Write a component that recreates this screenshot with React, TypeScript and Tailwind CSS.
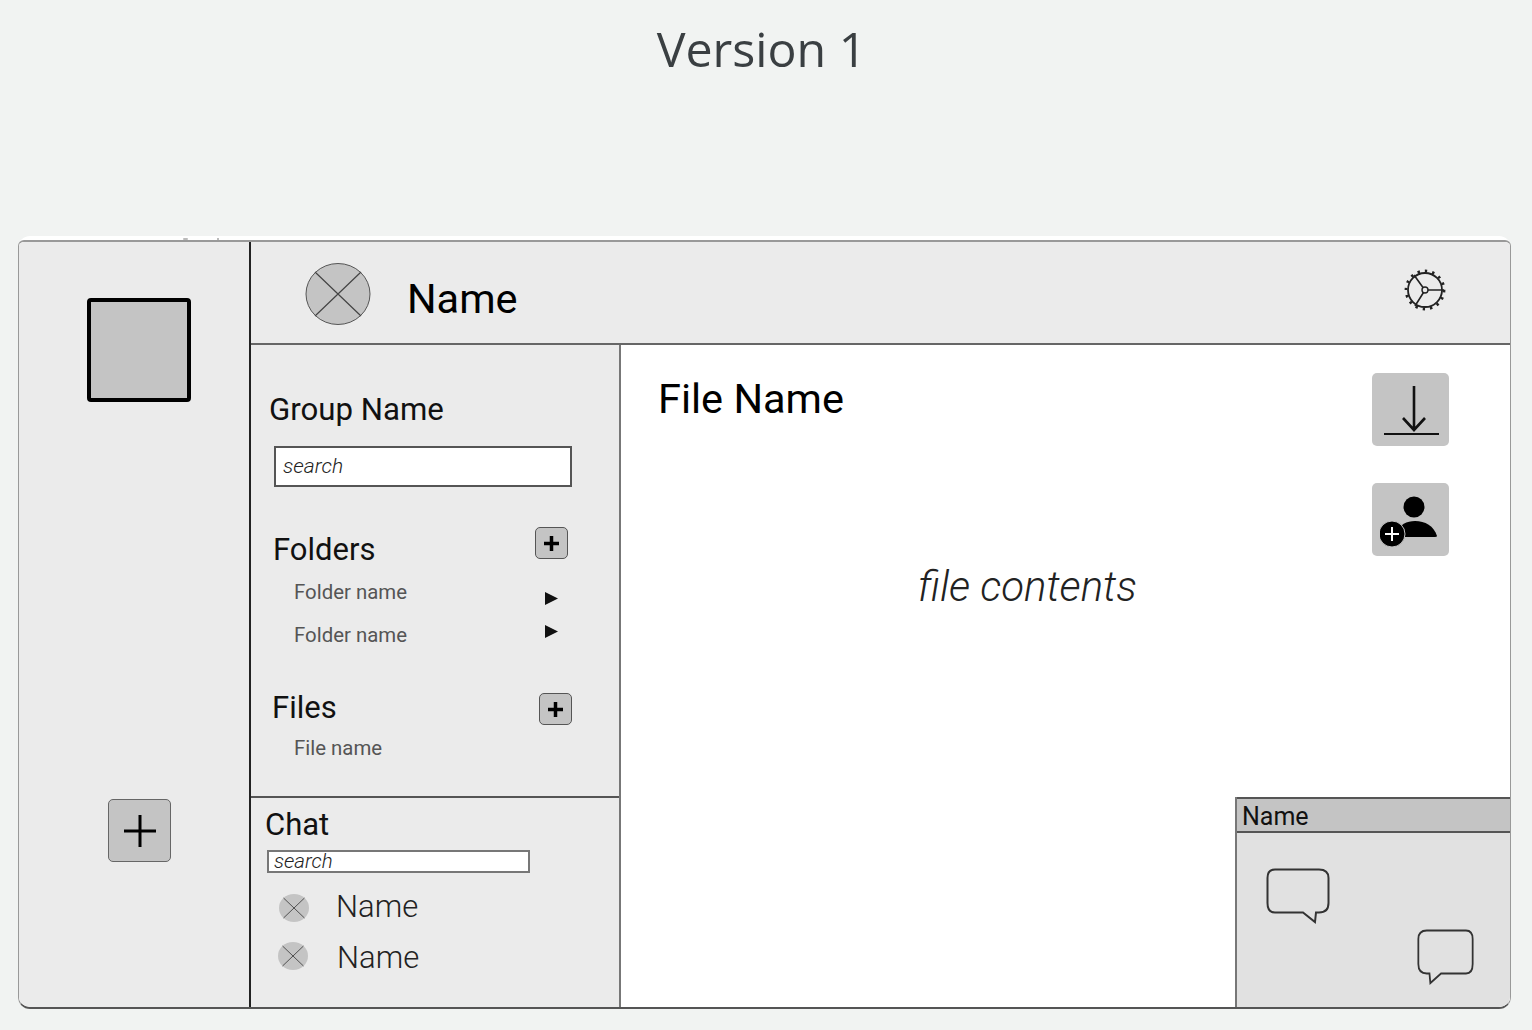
function PlaceholderAvatar({ small = false, className = '' }: { small?: boolean; className?: string }) {
  return (
    <svg width={small ? 30 : 66} height={small ? 30 : 62} viewBox="0 0 66 62" className={`shrink-0 ${className}`}>
      {small ? (
        <ellipse cx="33" cy="31" rx="33" ry="31" fill="#c4c4c4" />
      ) : (
        <ellipse cx="33" cy="31" rx="32" ry="30.5" fill="#c4c4c4" stroke="#555" strokeWidth="1" />
      )}
      <path d="M10 9 L56 53 M56 9 L10 53" stroke="#444" strokeWidth={small ? 2 : 1.2} fill="none" />
    </svg>
  )
}

function SmallPlus({ className }: { className: string }) {
  return (
    <div className={`flex h-[32px] w-[33px] items-center justify-center rounded-[5px] border border-[#555] bg-[#c4c4c4] ${className}`}>
      <svg width="17" height="17" viewBox="0 0 17 17">
        <path d="M8.5 1 V16 M1 8.5 H16" stroke="#000" strokeWidth="3.500" />
      </svg>
    </div>
  )
}

function Triangle() {
  return (
    <svg width="15" height="15" viewBox="0 0 15 15" className="shrink-0">
      <path d="M1 1 L14 7.5 L1 14 Z" fill="#111" />
    </svg>
  )
}

function SettingsWheel() {
  return (
    <svg width="44" height="44" viewBox="0 0 44 44" fill="none" stroke="#222">
      <circle cx="21" cy="22" r="17" strokeWidth="1.8" />
      <circle cx="21" cy="22" r="19" strokeWidth="2.8" strokeDasharray="2.4 5" />
      <circle cx="21" cy="22" r="3" strokeWidth="1.4" />
      <path d="M24 22 H40 M19 19.5 L10 7 M19.5 24.5 L11 38" strokeWidth="1.6" />
    </svg>
  )
}

function AddUser() {
  return (
    <svg width="62" height="56" viewBox="0 0 62 56">
      <circle cx="34" cy="15" r="10.5" fill="#000" />
      <path d="M17 42 C19 32 27 29 35 29 C45 29 54 34 57 44 Q57 45 55 45 H19 Z" fill="#000" />
      <circle cx="12" cy="42" r="13" fill="#000" stroke="#c4c4c4" strokeWidth="1" />
      <path d="M12 35 V49 M5 42 H19" stroke="#fff" strokeWidth="2" />
    </svg>
  )
}

function Bubble({ flip = false, width = 64 }: { flip?: boolean; width?: number }) {
  return (
    <svg
      width={width}
      height="58"
      viewBox="0 0 64 58"
      fill="none"
      preserveAspectRatio="none"
      className={flip ? '-scale-x-100' : ''}
    >
      <path
        d="M9 1.5 H53 Q62.500 1.500 62.500 10 V35 Q62.500 44.500 53 44.500 H50 L49 54 L37 44.500 H9 Q1.500 44.500 1.500 35 V10 Q1.500 1.500 9 1.500 Z"
        stroke="#333"
        strokeWidth="2"
      />
    </svg>
  )
}

export default function App() {
  return (
    <div className="flex h-[1030px] flex-col overflow-hidden bg-[#f1f3f2] font-['Roboto',sans-serif]">
      <h1 className="mt-[18px] h-[60px] pr-[9px] text-center font-['Open_Sans',sans-serif] text-[48.300px] leading-[60px] text-[#3a3f42]">
        Version 1
      </h1>

      {/* wireframe */}
      <div className="relative mx-[18px] mt-[158px] flex h-[773px] w-[1493px] flex-col rounded-[12px] bg-white pt-[4px]">
        <span className="absolute left-[165px] top-[2px] h-[2px] w-[5px] rounded-full bg-[#bbb]" />
        <span className="absolute left-[199px] top-[2px] h-[2px] w-[2px] bg-[#bbb]" />

        <div className="flex min-h-0 flex-1 overflow-hidden rounded-b-[12px] rounded-t-[6px] border-x border-b-2 border-t-2 border-x-[#999] border-b-[#555] border-t-[#999]">
          {/* server rail */}
          <div className="flex w-[230px] shrink-0 flex-col items-center bg-[#ebebeb] pl-[10px]">
            <div className="mt-[56px] h-[104px] w-[104px] rounded-[4px] border-[4px] border-black bg-[#c4c4c4]" />
            <div className="ml-[1px] mt-[397px] flex h-[63px] w-[63px] items-center justify-center rounded-[5px] border border-[#666] bg-[#c4c4c4]">
              <svg width="32" height="34" viewBox="0 0 32 34">
                <path d="M16 1 V33 M0 17 H32" stroke="#000" strokeWidth="3" />
              </svg>
            </div>
          </div>

          <div className="flex min-w-0 flex-1 flex-col border-l-2 border-[#222]">
            {/* header */}
            <div className="flex h-[103px] shrink-0 items-center border-b-2 border-[#666] bg-[#ebebeb] pl-[54px] pr-[62px]">
              <PlaceholderAvatar className="mt-[2px]" />
              <span className="ml-[36px] mt-[14px] text-[41.500px] text-black">Name</span>
              <div className="mb-[6px] ml-auto">
                <SettingsWheel />
              </div>
            </div>

            <div className="relative flex min-h-0 flex-1">
              {/* sidebar */}
              <div className="flex w-[370px] shrink-0 flex-col border-r-2 border-[#777] bg-[#ebebeb]">
                <div className="flex h-[453px] shrink-0 flex-col border-b-2 border-[#555] pl-[18px]">
                  <div className="mt-[45px] text-[31.200px] leading-[40px] text-[#111]">Group Name</div>
                  <div className="ml-[5px] mt-[16px] flex h-[41px] w-[298px] items-center border-2 border-[#555] bg-white pl-[7px] text-[21px] font-light italic text-[#222]">
                    search
                  </div>

                  <div className="ml-[4px] mt-[40px] flex w-[296px] items-start justify-between">
                    <span className="mt-[3px] text-[31px] leading-[40px] text-[#111]">Folders</span>
                    <SmallPlus className="mr-[1px]" />
                  </div>
                  <div className="ml-[25px] mt-[7px] flex w-[265px] items-center justify-between text-[20.4px] leading-[30px] text-[#555]">
                    <span>Folder name</span>
                    <span className="mt-[12px]"><Triangle /></span>
                  </div>
                  <div className="ml-[25px] mt-[13px] flex w-[265px] items-center justify-between text-[20.4px] leading-[30px] text-[#555]">
                    <span>Folder name</span>
                    <span className="mb-[8px]"><Triangle /></span>
                  </div>

                  <div className="ml-[3px] mt-[36px] flex w-[300px] items-start justify-between">
                    <span className="mt-[2px] text-[31px] leading-[40px] text-[#111]">Files</span>
                    <SmallPlus className="mt-[7px]" />
                  </div>
                  <div className="ml-[25px] mt-[5px] text-[20.4px] leading-[30px] text-[#555]">File name</div>
                </div>

                {/* chat */}
                <div className="flex-1 pl-[14px]">
                  <div className="mt-[7px] text-[31px] leading-[40px] text-[#111]">Chat</div>
                  <div className="ml-[2px] mt-[5px] flex h-[23px] w-[263px] items-center overflow-hidden border-2 border-[#777] bg-white pl-[5px] text-[20.500px] font-light italic text-[#222]">
                    search
                  </div>
                  <div className="ml-[14px] mt-[14px] flex items-center gap-[27px] text-[31px] font-light leading-[40px] text-[#222]">
                    <PlaceholderAvatar small className="mt-[2px]" />
                    <span>Name</span>
                  </div>
                  <div className="ml-[13px] mt-[11px] flex items-center gap-[29px] text-[31px] font-light leading-[40px] text-[#222]">
                    <PlaceholderAvatar small className="mb-[4px]" />
                    <span>Name</span>
                  </div>
                </div>
              </div>

              {/* file view */}
              <div className="flex min-w-0 flex-1 bg-white pl-[37px] pr-[61px] pt-[28px]">
                <div className="flex flex-1 flex-col">
                  <div className="text-[41.500px] leading-[52px] text-black">File Name</div>
                  <div className="ml-[260px] mt-[136px] text-[42px] font-light italic leading-[52px] text-[#222]">
                    file contents
                  </div>
                </div>
                <div className="flex flex-col gap-[37px]">
                  <div className="flex h-[73px] w-[77px] items-center justify-center rounded-[5px] bg-[#c4c4c4]">
                    <svg width="58" height="54" viewBox="0 0 58 54" fill="none" stroke="#111">
                      <path d="M32 3 V47 M21 35 L32 47 L43 35" strokeWidth="2.600" />
                      <path d="M2 51 H57" strokeWidth="2" />
                    </svg>
                  </div>
                  <div className="flex h-[73px] w-[77px] items-center justify-center rounded-[5px] bg-[#c4c4c4]">
                    <AddUser />
                  </div>
                </div>
              </div>

              {/* floating chat window */}
              <div className="absolute bottom-0 right-0 flex h-[210px] w-[275px] flex-col border-l-2 border-[#777] bg-[#e1e1e1]">
                <div className="flex h-[36px] shrink-0 items-center border-y-2 border-[#555] bg-[#c4c4c4] pl-[5px] pt-[3px] text-[25px] text-[#111]">
                  Name
                </div>
                <div className="relative flex-1">
                  <div className="absolute left-[29px] top-[35px]">
                    <Bubble />
                  </div>
                  <div className="absolute left-[180px] top-[96px]">
                    <Bubble flip width={57} />
                  </div>
                </div>
              </div>
            </div>
          </div>
        </div>
      </div>
    </div>
  )
}
